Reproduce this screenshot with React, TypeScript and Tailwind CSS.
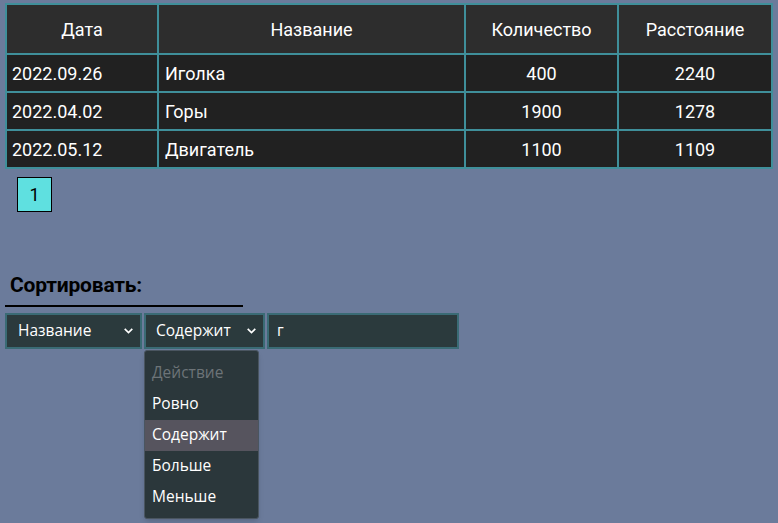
import React from "react";

const rows = [
  { date: "2022.09.26", name: "Иголка", count: 400, dist: 2240 },
  { date: "2022.04.02", name: "Горы", count: 1900, dist: 1278 },
  { date: "2022.05.12", name: "Двигатель", count: 1100, dist: 1109 },
];

const options = ["Ровно", "Содержит", "Больше", "Меньше"];

const Chevron = () => (
  <svg width="13" height="13" viewBox="0 0 12 12" fill="none" stroke="white" strokeWidth="1.5" className="shrink-0">
    <path d="M2.5 4.5 L6 8 L9.5 4.5" />
  </svg>
);

const App: React.FC = () => {
  return (
    <div className="w-[778px] h-[523px] bg-[#6b7b9b] overflow-hidden relative" style={{ fontFamily: "Roboto, sans-serif" }}>
      <div className="pt-[3px] pl-[5px]">
        <table className="table-fixed border-collapse w-[766px] text-white text-[18px]">
          <colgroup>
            <col className="w-[152px]" />
            <col className="w-[307px]" />
            <col className="w-[153px]" />
            <col className="w-[154px]" />
          </colgroup>
          <thead>
            <tr className="bg-[#2d2d2d] h-[50px]">
              <th className="border-2 border-[#3f8f9a] font-normal">Дата</th>
              <th className="border-2 border-[#3f8f9a] font-normal">Название</th>
              <th className="border-2 border-[#3f8f9a] font-normal">Количество</th>
              <th className="border-2 border-[#3f8f9a] font-normal">Расстояние</th>
            </tr>
          </thead>
          <tbody>
            {rows.map((r) => (
              <tr key={r.date} className="bg-[#212121] h-[38px]">
                <td className="border-2 border-[#3f8f9a] px-[5px]">{r.date}</td>
                <td className="border-2 border-[#3f8f9a] px-[6px]">{r.name}</td>
                <td className="border-2 border-[#3f8f9a] text-center">{r.count}</td>
                <td className="border-2 border-[#3f8f9a] text-center">{r.dist}</td>
              </tr>
            ))}
          </tbody>
        </table>
        <div className="mt-[8px] ml-[12px] w-[35px] h-[35px] bg-[#5fe0e0] border border-black flex items-center justify-center text-[18px] text-black">
          1
        </div>
      </div>

      <div className="mt-[58px] ml-[5px] w-[238px] border-b-2 border-black pl-[5px] pb-[3px]">
        <span className="text-[21px] font-bold text-black tracking-[-0.2px]">Сортировать:</span>
      </div>

      <div className="mt-[6px] ml-[5px] flex gap-[2px]" style={{ fontFamily: "'Open Sans', sans-serif" }}>
        <div className="w-[137px] h-[36px] bg-[#2b3a3d] border-2 border-[#3a6b75] flex items-center justify-between pl-[11px] pr-[5px] text-white text-[15.5px]">
          <span>Название</span>
          <Chevron />
        </div>
        <div className="relative">
          <div className="w-[121px] h-[36px] bg-[#2b3a3d] border-2 border-[#3a6b75] flex items-center justify-between pl-[10px] pr-[5px] text-white text-[15.5px]">
            <span>Содержит</span>
            <Chevron />
          </div>
          <div className="absolute left-0 top-[37px] w-[115px] bg-[#2b373b] rounded-[3px] border border-[#4a5560] shadow-md pt-[7px] pb-[5px] text-[15.5px]">
            <div className="h-[31px] flex items-center pl-[7px] text-[#6d7478]">Действие</div>
            {options.map((o) => (
              <div
                key={o}
                className={`h-[31px] flex items-center pl-[7px] text-white ${o === "Содержит" ? "bg-[#56545e]" : ""}`}
              >
                {o}
              </div>
            ))}
          </div>
        </div>
        <div className="w-[192px] h-[36px] bg-[#2b3a3d] border-2 border-[#3a6b75] flex items-center pl-[8px] text-white text-[15.5px]">
          г
        </div>
      </div>
    </div>
  );
};

export default App;
